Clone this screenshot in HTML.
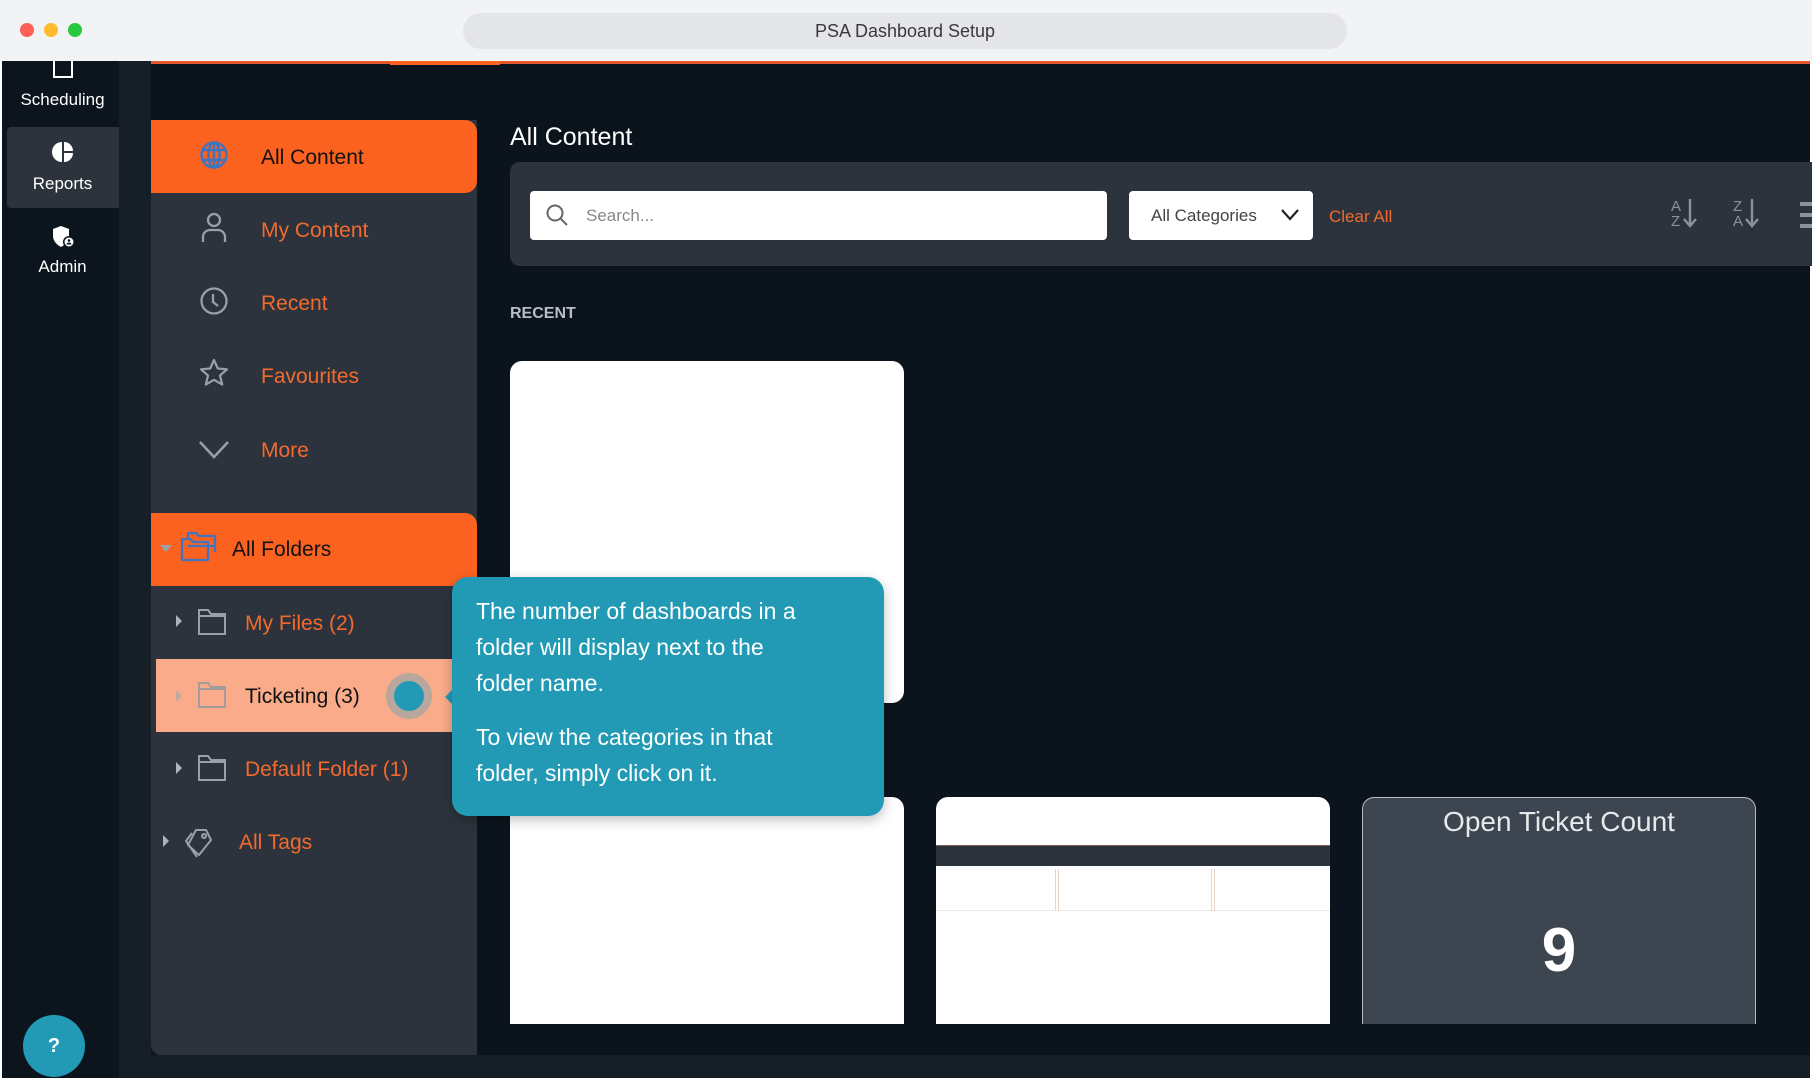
<!DOCTYPE html>
<html><head><meta charset="utf-8"><style>
*{margin:0;padding:0;box-sizing:border-box}
body{width:1812px;height:1080px;background:#fff;font-family:"Liberation Sans",sans-serif;position:relative;overflow:hidden}
.a{position:absolute}
.tb{left:0;top:0;width:1812px;height:61px;background:#f2f3f5}
.dot{width:14px;height:14px;border-radius:50%;top:23px}
.rail{left:2px;top:61px;width:117px;height:1017px;background:#0c141d}
.rail2{left:119px;top:61px;width:32px;height:1017px;background:#161e27}
.main{left:151px;top:61px;width:1659px;height:994px;background:#0b141d}
.bot{left:151px;top:1055px;width:1659px;height:23px;background:#161e27}
.rl{color:#fff;font-size:17px;width:117px;text-align:center;left:4px}
.side{left:151px;top:120px;width:326px;height:935px;background:#2d333c;border-radius:0 0 0 10px}
.item{left:151px;width:326px;height:73px}
.it{font-size:21px;color:#f26a2e;left:261px}
.ft{font-size:21px;color:#f26a2e}
.card{background:#fff;border-radius:12px 12px 0 0}
</style></head><body>
<div class="a tb"></div>
<div class="a dot" style="left:20px;background:#fe5f57"></div>
<div class="a dot" style="left:44px;background:#febc2e"></div>
<div class="a dot" style="left:68px;background:#28c840"></div>
<div class="a" style="left:463px;top:13px;width:884px;height:36px;border-radius:18px;background:#e4e5e9;text-align:center;line-height:36px;font-size:18px;color:#3a3a3a">PSA Dashboard Setup</div>

<div class="a rail"></div>
<div class="a rail2"></div>
<div class="a main"></div>
<div class="a bot"></div>
<div class="a" style="left:151px;top:61px;width:1659px;height:3px;background:#e4572a"></div>
<div class="a" style="left:390px;top:61px;width:110px;height:4px;background:#fb6220"></div>

<!-- rail -->
<div class="a" style="left:53px;top:61px;width:20px;height:17px;border:2px solid #fff;border-top:none"></div>
<div class="a rl" style="top:90px">Scheduling</div>
<div class="a" style="left:7px;top:127px;width:112px;height:81px;background:#2d333c;border-radius:4px 0 0 4px"></div>
<svg class="a" style="left:52px;top:141px" width="22" height="22" viewBox="0 0 22 22"><path d="M10 1A10 10 0 0 0 10 21Z" fill="#fff"/><path d="M12 1A9 9 0 0 1 21 10H12Z" fill="#fff"/><path d="M12 12H21A9 9 0 0 1 12 21Z" fill="#fff"/></svg>
<div class="a rl" style="top:174px">Reports</div>
<svg class="a" style="left:52px;top:225px" width="24" height="24" viewBox="0 0 24 24"><path d="M9 1L17 4V11C17 16 13 20 9 22C5 20 1 16 1 11V4Z" fill="#fff"/><circle cx="17" cy="17" r="6" fill="#0c141d"/><circle cx="17" cy="17" r="4.5" fill="#fff"/><circle cx="17" cy="15.5" r="1.3" fill="#0c141d"/><path d="M14.5 19.5a2.5 2 0 0 1 5 0z" fill="#0c141d"/></svg>
<div class="a rl" style="top:257px">Admin</div>
<div class="a" style="left:23px;top:1015px;width:62px;height:62px;border-radius:50%;background:#239ab5;color:#fff;font-weight:bold;font-size:20px;text-align:center;line-height:62px">?</div>

<!-- side panel -->
<div class="a side"></div>
<div class="a item" style="top:120px;background:#fb6220;border-radius:0 12px 12px 0"></div>
<svg class="a" style="left:199px;top:140px" width="30" height="30" viewBox="0 0 30 30" fill="none" stroke="#3f74c0" stroke-width="2.5"><circle cx="15" cy="15" r="12.5"/><ellipse cx="15" cy="15" rx="5.5" ry="12.5"/><path d="M3 10H27M3 20H27M15 2.5V27.5"/></svg>
<div class="a" style="left:261px;top:146px;font-size:21px;color:#111">All Content</div>

<svg class="a" style="left:201px;top:212px" width="26" height="32" viewBox="0 0 26 32" fill="none" stroke="#9aa0a8" stroke-width="2.3"><circle cx="13" cy="8" r="6"/><path d="M2 30V25a7 7 0 0 1 7-7h8a7 7 0 0 1 7 7v5"/></svg>
<div class="a it" style="top:219px">My Content</div>
<svg class="a" style="left:199px;top:286px" width="30" height="30" viewBox="0 0 30 30" fill="none" stroke="#9aa0a8" stroke-width="2.3"><circle cx="15" cy="15" r="12.5"/><path d="M14 8V16L19 20"/></svg>
<div class="a it" style="top:292px">Recent</div>
<svg class="a" style="left:199px;top:358px" width="30" height="30" viewBox="0 0 30 30" fill="none" stroke="#9aa0a8" stroke-width="2.2" stroke-linejoin="round"><path d="M15 2L18.8 10.5L28 11.3L21 17.5L23.2 26.6L15 21.8L6.8 26.6L9 17.5L2 11.3L11.2 10.5Z"/></svg>
<div class="a it" style="top:365px">Favourites</div>
<svg class="a" style="left:199px;top:440px" width="30" height="20" viewBox="0 0 30 20" fill="none" stroke="#9aa0a8" stroke-width="2.5"><path d="M1 2L15 17L29 2"/></svg>
<div class="a it" style="top:439px">More</div>

<div class="a item" style="top:513px;background:#fb6220;border-radius:0 12px 0 0"></div>
<div class="a" style="left:160px;top:545px;width:0;height:0;border-left:6px solid transparent;border-right:6px solid transparent;border-top:7px solid #9aa0a8"></div>
<svg class="a" style="left:180px;top:530px" width="38" height="32" viewBox="0 0 38 32" fill="none" stroke="#3f74c0" stroke-width="2.3" stroke-linejoin="round"><path d="M8 3H16L19 6H35V22"/><path d="M2 9H10L13 12H28V30H2Z"/><path d="M8 3V9"/><path d="M8 16H35"/></svg>
<div class="a" style="left:232px;top:538px;font-size:21px;color:#111">All Folders</div>

<div class="a" style="left:176px;top:615px;border-top:6px solid transparent;border-bottom:6px solid transparent;border-left:6px solid #aeb3ba"></div>
<svg class="a" style="left:197px;top:608px" width="30" height="28" viewBox="0 0 30 28" fill="none" stroke="#9aa0a8" stroke-width="2"><path d="M2 2H11L14 6H28V26H2Z"/><path d="M2 8H28"/></svg>
<div class="a ft" style="left:245px;top:612px">My Files (2)</div>

<div class="a" style="left:156px;top:659px;width:296px;height:73px;background:#f9ab8a"></div>
<div class="a" style="left:176px;top:690px;border-top:6px solid transparent;border-bottom:6px solid transparent;border-left:6px solid #c4a9a0"></div>
<svg class="a" style="left:197px;top:681px" width="30" height="28" viewBox="0 0 30 28" fill="none" stroke="#a39c9c" stroke-width="2"><path d="M2 2H11L14 6H28V26H2Z"/><path d="M2 8H28"/></svg>
<div class="a" style="left:245px;top:685px;font-size:21px;color:#111">Ticketing (3)</div>
<div class="a" style="left:386px;top:673px;width:46px;height:46px;border-radius:50%;background:#b9a69d"></div>
<div class="a" style="left:394px;top:681px;width:30px;height:30px;border-radius:50%;background:#239ab5"></div>

<div class="a" style="left:176px;top:762px;border-top:6px solid transparent;border-bottom:6px solid transparent;border-left:6px solid #aeb3ba"></div>
<svg class="a" style="left:197px;top:754px" width="30" height="28" viewBox="0 0 30 28" fill="none" stroke="#9aa0a8" stroke-width="2"><path d="M2 2H11L14 6H28V26H2Z"/><path d="M2 8H28"/></svg>
<div class="a ft" style="left:245px;top:758px">Default Folder (1)</div>

<div class="a" style="left:163px;top:835px;border-top:6px solid transparent;border-bottom:6px solid transparent;border-left:6px solid #aeb3ba"></div>
<svg class="a" style="left:184px;top:827px" width="30" height="32" viewBox="0 0 30 32" fill="none" stroke="#9aa0a8" stroke-width="2" stroke-linejoin="round"><path d="M12 3H22L27 13L15 28L4 18Z"/><path d="M8 6L2 14L13 30"/><circle cx="20" cy="9" r="2"/></svg>
<div class="a ft" style="left:239px;top:831px">All Tags</div>

<!-- main content -->
<div class="a" style="left:510px;top:123px;font-size:25px;color:#fff">All Content</div>
<div class="a" style="left:510px;top:162px;width:1302px;height:104px;background:#2d333c;border-radius:10px 0 0 10px"></div>
<div class="a" style="left:530px;top:191px;width:577px;height:49px;background:#fff;border-radius:4px"></div>
<svg class="a" style="left:545px;top:203px" width="24" height="24" viewBox="0 0 24 24" fill="none" stroke="#666" stroke-width="2"><circle cx="10" cy="10" r="7.5"/><path d="M15.5 15.5L22 22"/></svg>
<div class="a" style="left:586px;top:206px;font-size:17px;color:#888">Search...</div>
<div class="a" style="left:1129px;top:191px;width:184px;height:49px;background:#fff;border-radius:4px"></div>
<div class="a" style="left:1151px;top:206px;font-size:17px;color:#444">All Categories</div>
<svg class="a" style="left:1281px;top:209px" width="18" height="12" viewBox="0 0 18 12" fill="none" stroke="#222" stroke-width="2.2"><path d="M1 1L9 10L17 1"/></svg>
<div class="a" style="left:1329px;top:207px;font-size:17px;color:#f26a2e">Clear All</div>
<div class="a" style="left:1671px;top:199px;font-size:15px;line-height:15px;color:#8b929b">A<br>Z</div>
<svg class="a" style="left:1683px;top:198px" width="14" height="30" viewBox="0 0 14 30" fill="none" stroke="#8b929b" stroke-width="2.4"><path d="M7 1V27M1 21L7 28L13 21"/></svg>
<div class="a" style="left:1733px;top:199px;font-size:15px;line-height:15px;color:#8b929b">Z<br>A</div>
<svg class="a" style="left:1745px;top:198px" width="14" height="30" viewBox="0 0 14 30" fill="none" stroke="#8b929b" stroke-width="2.4"><path d="M7 1V27M1 21L7 28L13 21"/></svg>
<div class="a" style="left:1800px;top:202px;width:12px;height:26px;border-top:4px solid #8b929b;border-bottom:4px solid #8b929b"></div>
<div class="a" style="left:1800px;top:213px;width:12px;height:4px;background:#8b929b"></div>

<div class="a" style="left:510px;top:305px;font-size:16px;font-weight:bold;color:#b9bec5">RECENT</div>
<div class="a card" style="left:510px;top:361px;width:394px;height:342px;border-radius:12px"></div>
<div class="a card" style="left:510px;top:797px;width:394px;height:227px"></div>
<div class="a card" style="left:936px;top:797px;width:394px;height:227px"></div>
<div class="a" style="left:936px;top:845px;width:394px;height:21px;background:#2d333c;border-top:1px solid #7a5b50"></div>
<div class="a" style="left:936px;top:869px;width:394px;height:42px;border-bottom:1px solid #f3e6dd"></div>
<div class="a" style="left:1055px;top:869px;width:1px;height:42px;background:#e9d4c7"></div>
<div class="a" style="left:1058px;top:869px;width:1px;height:42px;background:#e9d4c7"></div>
<div class="a" style="left:1211px;top:869px;width:1px;height:42px;background:#e9d4c7"></div>
<div class="a" style="left:1214px;top:869px;width:1px;height:42px;background:#e9d4c7"></div>
<div class="a" style="left:1362px;top:797px;width:394px;height:227px;background:#3d4550;border:1px solid #b8bcc2;border-bottom:none;border-radius:12px 12px 0 0"></div>
<div class="a" style="left:1362px;top:806px;width:394px;text-align:center;font-size:28px;color:#e6e8ea">Open Ticket Count</div>
<div class="a" style="left:1362px;top:915px;width:394px;text-align:center;font-size:62px;font-weight:bold;color:#fff">9</div>

<!-- tooltip -->
<div class="a" style="left:445px;top:689px;width:0;height:0;border-top:8px solid transparent;border-bottom:8px solid transparent;border-right:8px solid #239ab5"></div>
<div class="a" style="left:452px;top:577px;width:432px;height:239px;background:#239ab5;border-radius:16px;box-shadow:0 4px 12px rgba(0,0,0,.25);padding:16px 24px;color:#fff;font-size:23px;line-height:36px">
<div style="width:330px">The number of dashboards in a folder will display next to the folder name.</div>
<div style="margin-top:18px;width:340px">To view the categories in that folder, simply click on it.</div>
</div>
</body></html>
